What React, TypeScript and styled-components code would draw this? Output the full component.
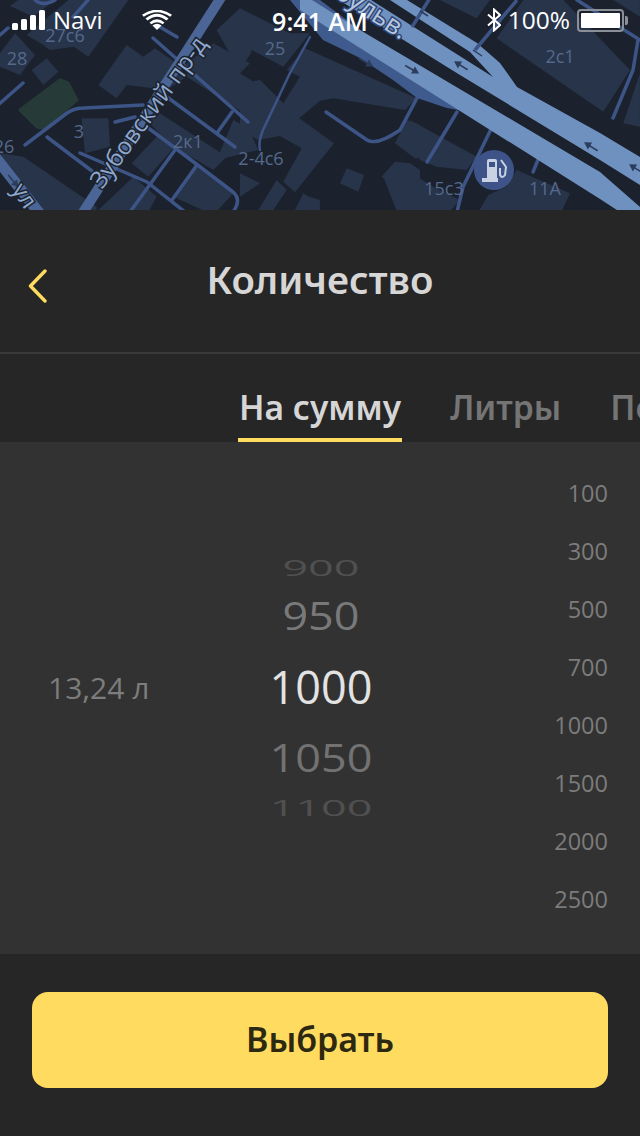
import React from "react";
import styled, { createGlobalStyle } from "styled-components";

const Global = createGlobalStyle`
  html, body { margin: 0; padding: 0; background: #262626; }
  #root { width: 640px; height: 1136px; overflow: hidden; }
`;

const FONT = `"Noto Sans", "Open Sans", "Liberation Sans", sans-serif`;
const NUM = `"Open Sans", "Noto Sans", sans-serif`;

const Screen = styled.div`
  width: 640px;
  height: 1136px;
  display: flex;
  flex-direction: column;
  background: #262626;
  font-family: ${FONT};
  overflow: hidden;
`;

const MapArea = styled.div`
  position: relative;
  height: 210px;
  flex: none;
  overflow: hidden;
  background: #1b222e;
`;
const MapSvg = styled.svg`
  display: block;
`;
const StatusBar = styled.div`
  position: absolute;
  inset: 0 0 auto 0;
  height: 40px;
  color: #fff;
  font-family: ${NUM};
  font-size: 24px;
  line-height: 40px;
`;
const StatusLeft = styled.div`
  position: absolute;
  left: 12px;
  top: 0;
  height: 40px;
  display: flex;
  align-items: center;
  gap: 7px;
`;
const WifiIcon = styled.svg`
  position: absolute;
  left: 142px;
  top: 10px;
`;
const StatusTime = styled.div`
  position: absolute;
  left: 0;
  right: 0;
  top: 1px;
  text-align: center;
  font-size: 25px;
  font-weight: 600;
`;
const StatusRight = styled.div`
  position: absolute;
  right: 16px;
  top: 0;
  height: 40px;
  display: flex;
  align-items: center;
  gap: 7px;
  font-size: 24.5px;
`;
const Battery = styled.div`
  width: 47px;
  height: 23px;
  box-sizing: border-box;
  border: 2px solid #8b8f98;
  border-radius: 4px;
  padding: 2px;
  position: relative;
  &::before {
    content: "";
    display: block;
    height: 100%;
    background: #fff;
    border-radius: 1px;
  }
  &::after {
    content: "";
    position: absolute;
    right: -6px;
    top: 5px;
    width: 3px;
    height: 9px;
    background: #8b8f98;
    border-radius: 0 2px 2px 0;
  }
`;

const Header = styled.header`
  height: 142px;
  flex: none;
  box-sizing: content-box;
  display: flex;
  align-items: center;
  justify-content: center;
  position: relative;
  border-bottom: 2px solid #3a3a3a;
`;
const BackIcon = styled.svg`
  position: absolute;
  left: 28px;
  top: 59px;
`;
const Title = styled.h1`
  margin: 0;
  color: #d6d6d6;
  font-size: 38.4px;
  font-weight: 600;
  line-height: 1;
  position: relative;
  top: -2px;
`;

const Tabs = styled.nav`
  height: 88px;
  flex: none;
  display: flex;
  gap: 47px;
  padding-left: 238px;
  align-items: flex-end;
  white-space: nowrap;
  overflow: hidden;
`;
const Tab = styled.div<{ $active?: boolean }>`
  height: 88px;
  box-sizing: border-box;
  padding: 30px 1px 0;
  font-size: 33.6px;
  line-height: 46px;
  font-weight: 600;
  color: ${(p) => (p.$active ? "#d6d6d6" : "#757575")};
  border-bottom: 4px solid ${(p) => (p.$active ? "#ffdb60" : "transparent")};
`;

const Picker = styled.section`
  position: relative;
  height: 512px;
  flex: none;
  background: #323232;
  overflow: hidden;
`;
const Liters = styled.div`
  position: absolute;
  left: 48px;
  top: 226px;
  color: #7d7d7d;
  font-family: ${NUM};
  font-size: 30px;
  line-height: 40px;
`;
const Wheel = styled.div`
  position: absolute;
  left: 201px;
  width: 240px;
  top: 100px;
  height: 300px;
`;
const WheelItem = styled.div<{ $top: number; $sy: number; $color: string }>`
  position: absolute;
  left: 0;
  right: 0;
  top: ${(p) => p.$top}px;
  height: 60px;
  line-height: 60px;
  text-align: center;
  font-family: ${NUM};
  font-size: 45px;
  color: ${(p) => p.$color};
  transform: scaleY(${(p) => p.$sy});
`;
const Scale = styled.div`
  position: absolute;
  right: 32px;
  top: 22px;
  display: flex;
  flex-direction: column;
  align-items: flex-end;
`;
const ScaleItem = styled.div`
  height: 58px;
  line-height: 58px;
  font-family: ${NUM};
  font-size: 23.5px;
  color: #7c7c7c;
`;

const Footer = styled.footer`
  flex: 1;
  padding: 38px 32px 0;
  background: #262626;
`;
const Button = styled.button`
  display: block;
  width: 100%;
  height: 96px;
  border: 0;
  padding: 0 0 2px;
  border-radius: 16px;
  background: #ffdb60;
  color: #2d2810;
  font-family: ${FONT};
  font-size: 34px;
  font-weight: 600;
`;

/* Building footprints traced from the map, in 3x coordinates. */
const leftBuildings = [
  "0,160 45,100 105,165 60,225 0,200",
  "95,210 140,175 175,215 130,255",
  "80,105 205,0 385,0 265,170 222,140 150,150 130,135",
  "30,18 55,0 165,0 100,50",
  "295,255 380,135 430,170 465,145 530,190 560,230 500,270 380,255 350,295",
  "650,90 720,25 870,100 930,100 850,200 755,150 720,215",
  "560,190 640,130 750,190 720,220 800,270 740,345 560,230",
  "245,355 325,355 330,440 255,460",
  "440,360 465,330 680,470 640,510 590,480 525,450",
  "395,490 470,410 520,445 445,530",
  "700,360 745,385 775,450 650,480",
  "0,460 70,470 290,620 290,645 120,645",
  "280,645 400,530 470,590 440,645",
  "520,590 590,500 700,580 640,645",
  "890,645 910,585 960,600 960,645",
];
const centreBuildings = [
  "195,25 530,175 495,210 280,175 240,182 178,235 282,310 165,457 130,425 185,325 120,288 55,300 0,270 0,130 60,120 130,190 180,110 140,90",
  "465,310 500,240 540,255 540,355 525,355",
  "300,430 320,385 372,405 355,455",
  "425,410 465,365 510,370 540,390 540,490 520,490 480,455",
  "165,510 190,460 220,480 205,510",
  "0,400 60,430 0,470",
  "55,510 110,420 140,450 100,510",
  "0,20 35,35 0,90",
];
const rightBuildings = [
  "530,115 610,0 730,0 930,210 850,335",
  "910,370 960,220 960,380",
  "270,360 470,470 440,510 350,500 300,480 290,430",
  "190,530 225,490 340,560 420,600 380,645 235,645",
  "505,585 560,560 590,510 750,580 720,645 470,645",
  "360,0 470,55 510,0",
  "880,0 960,0 960,50",
];

const thin: [string, number][] = [
  ["M 0 35 L 8 28", 3.5],
  ["M 73 17 L 88 0", 3.5],
  ["M 35 0 Q 43 7 55 0", 3.5],
  ["M 23 83 L -2 105", 3.5],
  ["M 25 145 L 67 113 Q 74 108 84 108 L 143 105", 3.5],
  ["M 115 122 L 135 117", 3.5],
  ["M 47 137 L 92 171", 3.5],
  ["M 80 153 L 147 182 L 185 212", 3.5],
  ["M 147 127 L 195 163 L 233 192 Q 242 200 233 212", 3.5],
  ["M 175 150 L 130 212", 3.5],
  ["M 197 165 L 172 200", 3.5],
  ["M 167 97 L 235 147", 3.5],
  ["M 232 112 L 217 133", 3.5],
  ["M 153 38 L 248 122", 3.5],
  ["M 160 27 L 177 37", 3.5],
  ["M 310 37 L 290 73 L 263 130 Q 258 142 260 150", 2.5],
  ["M 326 112 L 367 140 Q 377 146 400 130 L 417 98", 3.5],
  ["M 457 112 L 427 162", 3.5],
  ["M 492 127 L 463 187 L 457 212", 3.5],
  ["M 540 155 L 533 172", 3.5],
  ["M 577 0 L 640 40", 3.5],
  ["M 638 40 L 633 70 L 613 118", 3.5],
];

const labels: [string, number, number][] = [
  ["27с6", 65, 42],
  ["28", 17, 65],
  ["26", 4, 153],
  ["3", 79, 138],
  ["25", 275, 55],
  ["2к1", 188, 148],
  ["2-4с6", 261, 165],
  ["2с1", 560, 63],
  ["15с3", 444, 195],
  ["11А", 545, 195],
];

const arrows = [
  [367, 63, 30],
  [413, 70, 30],
  [460, 65, 212],
  [590, 146, 212],
  [635, 168, 212],
  [14, 182, 50],
];

function MapDrawing() {
  return (
    <MapSvg width="640" height="210" viewBox="0 0 640 210" fontFamily={NUM}>
      <g transform="scale(0.3333)" fill="#28344a">
        {leftBuildings.map((b) => (
          <polygon key={b} points={b} />
        ))}
      </g>
      <g transform="translate(240 40) scale(0.3333)" fill="#28344a">
        {centreBuildings.map((b) => (
          <polygon key={b} points={b} />
        ))}
      </g>
      <g transform="translate(320 0) scale(0.3333)" fill="#28344a">
        {rightBuildings.map((b) => (
          <polygon key={b} points={b} />
        ))}
      </g>
      <path d="M 20 110 L 60 80 L 68 83 L 77 100 L 43 128 L 37 127 Z" fill="#263b38" strokeLinejoin="round" stroke="#263b38" strokeWidth="3" />
      {thin.map(([d, w], i) => (
        <path key={i} d={d} stroke="#3d5486" strokeWidth={w} fill="none" strokeLinecap="round" strokeLinejoin="round" />
      ))}
      <path d="M -4 158 L 40 214" stroke="#4a6596" strokeWidth="11" fill="none" />
      <path d="M 222 -4 L 82 214" stroke="#4a6596" strokeWidth="10" fill="none" />
      {/* ramp */}
      <path d="M 290 0 L 320 0 L 470 112 L 447 108 L 417 98 L 393 80 L 360 58 L 323 40 Z" fill="#3f5a8c" />
      {/* lower carriageway */}
      <path d="M 312 0 L 360 30 L 600 172 L 640 207 L 640 212 L 620 212 L 600 199 L 360 48 L 300 10 L 300 0 Z" fill="#6f91bf" />
      {/* upper carriageway with its slip road */}
      <path d="M 407 0 L 477 43 L 500 63 L 517 87 L 600 133 L 640 157 L 640 185 L 600 160 L 460 75 L 339 0 Z" fill="#6f91bf" />
      <path d="M 390 0 L 470 52 L 493 77 L 371 0 Z" fill="#1b222e" />
      {/* side roads above the carriageway */}
      <path d="M 430 -2 L 412 27" stroke="#3d5486" strokeWidth="3.5" fill="none" />
      <path d="M 517 0 L 475 50" stroke="#3d5486" strokeWidth="3.5" fill="none" />
      <path d="M 420 11 L 428 16 M 473 50 L 482 56" stroke="#2c3c5c" strokeWidth="1.5" />
      {arrows.map(([x, y, r], i) => (
        <g key={i} transform={`translate(${x} ${y}) rotate(${r})`} stroke="#2c3c5c" strokeWidth="1.6" fill="#2c3c5c">
          <path d="M -9 0 L 5 0" fill="none" />
          <path d="M 7 0 L 0 -4 L 0 4 Z" stroke="none" />
        </g>
      ))}
      {labels.map(([t, x, y]) => (
        <text key={t} x={x} y={y} textAnchor="middle" fontSize="18" fill="#55698c">
          {t}
        </text>
      ))}
      <g fontSize="24" fill="#8fa8cc" stroke="#1b222e" strokeWidth="3" paintOrder="stroke">
        <text transform="translate(102 190) rotate(-54)">Зубовский пр-д</text>
        <text transform="translate(11 190) rotate(55)" fontSize="23">ул</text>
        <text transform="translate(401 40) rotate(33)" textAnchor="end" fontSize="26" fill="#b4c6e0" stroke="#2f4571">
          бульв.
        </text>
      </g>
      <circle cx="494" cy="170" r="20" fill="#3e5488" />
      <g fill="#c8d2e2">
        <path
          d="M 487 161 Q 487 159 489 159 L 495 159 Q 497 159 497 161 L 497 178 L 487 178 Z M 489 162 L 489 167 L 495 167 L 495 162 Z"
          fillRule="evenodd"
        />
        <rect x="482" y="178" width="16" height="4" />
        <path d="M 501 160 L 506 167 L 505 175 Q 502 179 500 175 L 500 168" fill="none" stroke="#c8d2e2" strokeWidth="2" />
      </g>
    </MapSvg>
  );
}

const wheel = [
  { t: "900", top: -4, sy: 0.48, c: "#505050" },
  { t: "950", top: 44, sy: 0.85, c: "#797979" },
  { t: "1000", top: 115, sy: 1, c: "#e3e3e3" },
  { t: "1050", top: 186, sy: 0.85, c: "#727272" },
  { t: "1100", top: 236, sy: 0.48, c: "#505050" },
];
const scale = ["100", "300", "500", "700", "1000", "1500", "2000", "2500"];

export default function App() {
  return (
    <Screen>
      <Global />
      <MapArea>
        <MapDrawing />
        <StatusBar>
          <StatusLeft>
            <svg width="34" height="20" viewBox="0 0 34 20" fill="#fff">
              <rect x="0" y="13" width="6" height="7" rx="1.5" />
              <rect x="9" y="9" width="6" height="11" rx="1.5" />
              <rect x="18" y="5" width="6" height="15" rx="1.5" />
              <rect x="27" y="0" width="6" height="20" rx="1.5" />
            </svg>
            <span>Navi</span>
          </StatusLeft>
          <WifiIcon width="30" height="22" viewBox="0 0 30 22" fill="#fff">
            <path d="M15 20 L10.5 15.5 Q15 12 19.5 15.5 Z" />
            <path d="M7.5 12.5 Q15 6 22.5 12.5 L20.7 14.3 Q15 10 9.3 14.3 Z" />
            <path d="M3.5 8.5 Q15 -1 26.5 8.5 L24.5 10.6 Q15 3 5.5 10.6 Z" />
            <path d="M0 4.8 Q15 -5.5 30 4.8 L28.2 6.8 Q15 -2.5 1.8 6.8 Z" />
          </WifiIcon>
          <StatusTime>9:41 AM</StatusTime>
          <StatusRight>
            <svg width="14" height="24" viewBox="0 0 14 24" fill="none" stroke="#fff" strokeWidth="2">
              <path d="M1 6.5 L13 17 L7 22.5 L7 1.5 L13 7 L1 17.5" />
            </svg>
            <span>100%</span>
            <Battery />
          </StatusRight>
        </StatusBar>
      </MapArea>

      <Header>
        <BackIcon width="20" height="34" viewBox="0 0 20 34" fill="none" stroke="#ffdb60" strokeWidth="3.4" strokeLinecap="round" strokeLinejoin="round">
          <path d="M17 2 L2.5 17 L17 32" />
        </BackIcon>
        <Title>Количество</Title>
      </Header>

      <Tabs>
        <Tab $active>На сумму</Tab>
        <Tab>Литры</Tab>
        <Tab>Полный бак</Tab>
      </Tabs>

      <Picker>
        <Liters>13,24 л</Liters>
        <Wheel>
          {wheel.map((w) => (
            <WheelItem key={w.t} $top={w.top} $sy={w.sy} $color={w.c}>
              {w.t}
            </WheelItem>
          ))}
        </Wheel>
        <Scale>
          {scale.map((s) => (
            <ScaleItem key={s}>{s}</ScaleItem>
          ))}
        </Scale>
      </Picker>

      <Footer>
        <Button>Выбрать</Button>
      </Footer>
    </Screen>
  );
}
